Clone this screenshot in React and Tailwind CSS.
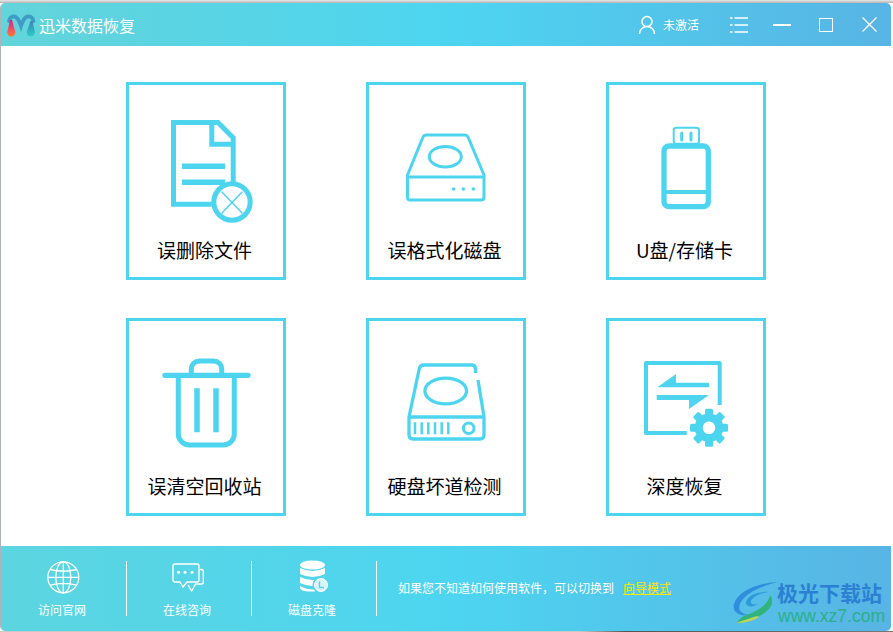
import React from "react";

const C = "#4dd5f0";

const DocIcon = () => (
  <g fill="none" stroke={C}>
    <path d="M82.8 119.2H44.5V37.5H89L104.2 52.7V100" strokeWidth="5" />
    <path d="M82.8 37.5V59.2H104" strokeWidth="5" />
    <path d="M53 81.2H96M53 97.2H96" strokeWidth="5.5" />
    <circle cx="103" cy="117" r="18.2" strokeWidth="5" fill="#fff" />
    <path d="M92.7 106.7L113.3 128.3M113.3 106.7L92.7 128.3" strokeWidth="1.5" />
  </g>
);

const DiskIcon = () => (
  <g fill="none" stroke={C} strokeWidth="3" strokeLinejoin="round">
    <path d="M57 50H96Q98 50 99 52L115 90V112Q115 115 112 115H41Q38.500 115 38.500 112V90L54 52Q55 50 57 50Z" />
    <path d="M38.500 92H115" />
    <ellipse cx="76.300" cy="71.700" rx="16" ry="10.300" />
    <g fill={C} stroke="none">
      <circle cx="84.700" cy="104" r="1.800" />
      <circle cx="94.300" cy="104" r="1.800" />
      <circle cx="104.300" cy="104" r="1.800" />
    </g>
  </g>
);

const UsbIcon = () => (
  <g fill="none" stroke={C}>
    <rect x="64.700" y="42.700" width="25.300" height="16" rx="2.500" strokeWidth="2" />
    <path d="M72.700 48V55M82 48V55" strokeWidth="3" strokeLinecap="round" />
    <rect x="55" y="61" width="44.300" height="60.700" rx="5" strokeWidth="5.300" />
    <path d="M55 107H99" strokeWidth="4" />
  </g>
);

const TrashIcon = () => (
  <g fill="none" stroke={C}>
    <path d="M36 54.300H119" strokeWidth="5.300" strokeLinecap="round" />
    <path d="M62.300 54V48a8 8 0 0 1 8-8H84.700a8 8 0 0 1 8 8V54" strokeWidth="5" />
    <path d="M49.300 54V113a11 11 0 0 0 11 11H94.300a11 11 0 0 0 11-11V54" strokeWidth="5" />
    <path d="M68 67.300V111.300M87 67.300V111.300" strokeWidth="5.500" />
  </g>
);

const HddIcon = () => (
  <g fill="none" stroke={C} strokeWidth="3.300">
    <path d="M106.500 52V48Q106.500 44 102.500 44H55Q51 44 50.200 48L40 96V114Q40 118 44 118H111Q115 118 115 114V96L109 59" />
    <path d="M40 96H115" />
    <ellipse cx="76.700" cy="70" rx="20.800" ry="12.800" />
    <path d="M46 101.300V113.300M52.700 101.300V113.300M59.300 101.300V113.300M66 101.300V113.300M72.700 101.300V113.300M79.300 101.300V113.300" strokeWidth="2.500" />
    <circle cx="99.700" cy="107.300" r="5.300" strokeWidth="3" />
  </g>
);

const DeepIcon = () => (
  <g>
    <path d="M110.700 84V42H37V112H77.700" fill="none" stroke={C} strokeWidth="4" strokeLinejoin="round" />
    <polygon points="67,53 48.300,66.300 100,66.300 100,61.700 67,61.700" fill={C} />
    <polygon points="47.700,74 100,74 80,88 80,79 47.700,79" fill={C} />
    <circle cx="100" cy="106.700" r="21" fill="#fff" />
    <circle cx="100" cy="106.700" r="10.300" fill="none" stroke={C} strokeWidth="8" />
    {[0, 45, 90, 135, 180, 225, 270, 315].map((a) => (
      <rect key={a} x="96" y="87.700" width="8" height="7" rx="1.500" fill={C} transform={`rotate(${a} 100 106.700)`} />
    ))}
  </g>
);

const cards = [
  ["误删除文件", DocIcon],
  ["误格式化磁盘", DiskIcon],
  ["U盘/存储卡", UsbIcon],
  ["误清空回收站", TrashIcon],
  ["硬盘坏道检测", HddIcon],
  ["深度恢复", DeepIcon],
];

const Globe = () => (
  <svg width="42" height="38" viewBox="41 559 42 38" fill="none" stroke="#fff" strokeWidth="1.300">
    <circle cx="63.300" cy="577.300" r="15.500" />
    <ellipse cx="63.300" cy="577.300" rx="7.500" ry="15.500" />
    <path d="M63.300 561.800V592.800M47.800 577.300H78.800M50 569.500Q63.300 573 76.600 569.500M50 585.100Q63.300 581.600 76.600 585.100" />
  </svg>
);

const Chat = () => (
  <svg width="42" height="38" viewBox="166 559 42 38" fill="none" stroke="#fff" strokeWidth="1.400" strokeLinejoin="round">
    <path d="M175 564H197Q199 564 199 566V580Q199 582 197 582H187L183 587L180 582H175Q173 582 173 580V566Q173 564 175 564Z" />
    <path d="M200 569.500H201.500Q203.300 569.500 203.300 571.500V582Q203.300 584 201.500 584H195.500L191.700 591L188 585" />
    <g fill="#fff" stroke="none">
      <circle cx="178.500" cy="572.300" r="1.500" />
      <circle cx="185" cy="572.300" r="1.500" />
      <circle cx="192" cy="572.300" r="1.500" />
    </g>
  </svg>
);

const Database = () => (
  <svg width="42" height="38" viewBox="291 559 42 38">
    <ellipse cx="312.500" cy="565" rx="12.500" ry="4.500" fill="#fff" />
    <path d="M300 568Q312.500 574 325 568V574Q312.500 580 300 574Z" fill="#fff" />
    <path d="M300 577Q312.500 583 325 577V583Q312.500 589 300 583Z" fill="#fff" />
    <path d="M300 586Q306 589.500 315 589.500V591.500H308Q300 590.500 300 588Z" fill="#fff" />
    <circle cx="321" cy="585" r="8.500" fill="#52d4e9" />
    <circle cx="321" cy="585" r="6.500" fill="#d8f5fb" stroke="#fff" strokeWidth="1" />
    <path d="M319.500 581.500V587.500H324" fill="none" stroke="#52d4e9" strokeWidth="1.300" />
  </svg>
);

const Logo = () => (
  <svg width="32" height="26" viewBox="5 11 32 26" className="shrink-0">
    <defs>
      <linearGradient id="lg1" x1="0" y1="0" x2="0" y2="1">
        <stop offset="0" stopColor="#d6218f" />
        <stop offset="0.5" stopColor="#ee4a6a" />
        <stop offset="1" stopColor="#ff7a2f" />
      </linearGradient>
      <linearGradient id="lg2" x1="0" y1="0" x2="0" y2="1">
        <stop offset="0" stopColor="#3d7fb8" />
        <stop offset="1" stopColor="#2ad0c8" />
      </linearGradient>
    </defs>
    <path d="M9 20Q10.500 15 14.500 15.500Q18 16 21 25Q24 16 27.500 15.500Q32 15 33.500 20" fill="none" stroke="#3e9cc6" strokeWidth="3.800" strokeLinecap="round" />
    <path d="M10 19L7.300 31A4 4.500 0 1 0 15.300 31L12 19Z" fill="url(#lg1)" />
    <path d="M30.500 20L26.800 31A4 4.500 0 1 0 34.800 31L32.500 20Z" fill="url(#lg2)" />
  </svg>
);

const FooterItem = ({ label, children }) => (
  <div className="w-[124px] pr-1 flex flex-col items-center text-white">
    {children}
    <div className="mt-[5px] text-xs leading-4">{label}</div>
  </div>
);

const Divider = () => <div className="w-px h-[55px] mt-[2px] bg-white shrink-0" />;

const Watermark = () => (
  <div className="absolute left-[733px] top-[580px] flex items-start">
    <svg width="46" height="44" viewBox="0 0 46 44" className="shrink-0">
      <path d="M45 2C25 3 5 11 1 24C-1 32 6 36 15 35C7 33 4 29 8 22C13 13 28 6 45 2Z" fill="#2f8fdc" />
      <path d="M36 12C25 11 14 16 13 22C12 27 20 28 25 24C20 25 17 24 18 21C20 16 28 13 36 12Z" fill="#2f9ad8" />
      <path d="M37 15C36 23 26 31 13 35C8 37 5 41 3 43C15 42 32 36 38 26C40 22 39 17 37 15Z" fill="#33b37c" />
      <path d="M24 36C18 38 10 40 3 43C12 43 20 41 26 37Z" fill="#b9d65a" />
    </svg>
    <div className="ml-[-2px] flex flex-col">
      <div className="text-[21px] leading-[28px] font-bold text-[#2b80d2] whitespace-nowrap mt-[-2px]">极光下载站</div>
      <div className="text-[17.500px] leading-5 font-['Liberation_Sans',sans-serif] text-[#2bb08a] whitespace-nowrap ml-px">www.xz7.com</div>
    </div>
  </div>
);

export default function App() {
  return (
    <div className="relative w-[893px] h-[632px] overflow-hidden bg-white font-['Noto_Sans_CJK_SC',sans-serif]">
      <div className="h-[3px] bg-[linear-gradient(180deg,#e8e8e8,#b4b4b4)]" />
      <div className="w-[891px] h-[628px] border-l border-[#aab4ba] flex flex-col overflow-hidden rounded-[5px] bg-white">
        <header className="h-[43px] shrink-0 flex items-center pl-[4px] text-white bg-[linear-gradient(90deg,#63d4da_0%,#4dd5f0_50%,#58b4e4_100%)]">
          <Logo />
          <span className="ml-[2px] text-base leading-6">迅米数据恢复</span>
          <svg width="20" height="20" viewBox="0 0 20 20" fill="none" stroke="#fff" strokeWidth="1.500" className="ml-[502px]">
            <circle cx="10" cy="6.500" r="5" />
            <path d="M2.500 19C2.500 14.500 6 11.500 10 11.500C14 11.500 17.500 14.500 17.500 19" />
          </svg>
          <span className="ml-[6px] text-xs leading-4">未激活</span>
          <svg width="18" height="16" viewBox="0 0 18 16" stroke="#fff" strokeWidth="1.500" className="ml-[31px]">
            <path d="M0 1H2.500M0 8H2.500M0 15H2.500M4.500 1H18M4.500 8H18M4.500 15H18" />
          </svg>
          <div className="ml-[25px] w-[18px] h-[2px] bg-white" />
          <div className="ml-[28px] w-[14px] h-[14px] border-[1.500px] border-white" />
          <svg width="15" height="15" viewBox="0 0 15 15" stroke="#fff" strokeWidth="1.300" className="ml-[29px]">
            <path d="M0.500 0.500L14.500 14.500M14.500 0.500L0.500 14.500" />
          </svg>
        </header>

        <main className="h-[500px] shrink-0 pt-9 pl-[125px] bg-white">
          <div className="grid grid-cols-[160px_160px_160px] gap-x-20 gap-y-[38px]">
            {cards.map(([label, Icon]) => (
              <div key={label} className="h-[198px] border-[3px] border-[#4dd5f0] flex flex-col items-center">
                <svg width="154" height="150" viewBox="0 0 154 150" className="shrink-0">
                  <Icon />
                </svg>
                <div className="mt-[1px] pr-[3px] text-[19px] leading-7 text-black whitespace-nowrap">{label}</div>
              </div>
            ))}
          </div>
        </main>

        <footer className="flex-1 flex items-start pt-[13px] pl-px bg-[linear-gradient(90deg,#5cd5e0_0%,#4dd5f0_50%,#58b4e4_100%)]">
          <FooterItem label="访问官网"><Globe /></FooterItem>
          <Divider />
          <FooterItem label="在线咨询"><Chat /></FooterItem>
          <Divider />
          <FooterItem label="磁盘克隆"><Database /></FooterItem>
          <Divider />
          <div className="ml-[21px] mt-[21px] text-xs leading-4 text-white whitespace-nowrap">
            如果您不知道如何使用软件，可以切换到
            <span className="ml-[9px] text-[#ffe600] underline">向导模式</span>
          </div>
        </footer>
      </div>
      <div className="h-px bg-[linear-gradient(90deg,#c8c8c8_0%,#c8c8c8_65%,#555_70%,#777_100%)]" />
      <Watermark />
    </div>
  );
}
